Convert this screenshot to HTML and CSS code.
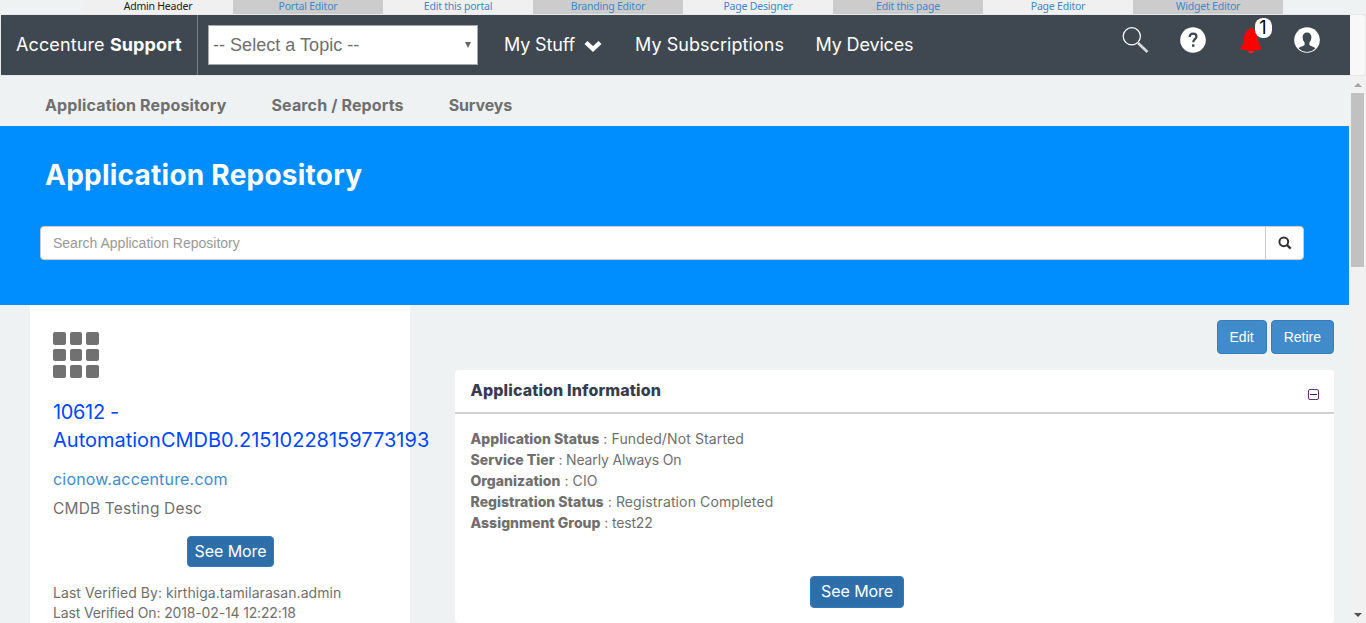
FILE: index.html
```html
<!DOCTYPE html>
<html lang="en">
<head>
<meta charset="utf-8">
<title>Application Repository</title>
<link rel="stylesheet" href="styles.css">
</head>
<body>
<div class="admin-bar">
  <span class="admin-tab current">Admin Header</span>
  <a class="admin-tab">Portal Editor</a>
  <a class="admin-tab">Edit this portal</a>
  <a class="admin-tab">Branding Editor</a>
  <a class="admin-tab">Page Designer</a>
  <a class="admin-tab">Edit this page</a>
  <a class="admin-tab">Page Editor</a>
  <a class="admin-tab">Widget Editor</a>
</div>
<header class="top-frame">
  <div class="top-bar">
    <div class="brand">Accenture <strong>Support</strong></div>
    <div class="topic-select"><span>-- Select a Topic --</span><i class="caret"></i></div>
    <nav class="top-nav">
      <a class="stuff"><span>My Stuff</span>
        <svg width="18" height="12" viewBox="0 0 18 12"><path d="M2 2.500 9 9l7-6.500" fill="none" stroke="#fff" stroke-width="4.400"/></svg></a>
      <a class="subs">My Subscriptions</a>
      <a class="devices">My Devices</a>
    </nav>
    <div class="tools">
      <svg class="tool-search" width="28" height="28" viewBox="0 0 28 28"><circle cx="9.800" cy="9.300" r="8.600" fill="none" stroke="#fff" stroke-width="1.200"/><path d="M16 16 25.500 25" stroke="#d8dadc" stroke-width="2.600"/></svg>
      <svg class="tool-help" width="26" height="26" viewBox="0 0 26 26"><circle cx="13" cy="13" r="12.800" fill="#fff"/><path d="M9.700 10.100c0-2.200 1.400-3.500 3.400-3.500s3.400 1.200 3.400 3c0 2.400-3.300 2.700-3.300 5.600" fill="none" stroke="#3f4850" stroke-width="2.200"/><rect x="12" y="17.300" width="2.400" height="2.500" fill="#3f4850"/></svg>
      <span class="alerts">
        <svg width="22" height="27" viewBox="0 0 22 27"><path d="M11 .5c1.400 0 2 1 2.200 2 3.200 1.300 4.300 4.300 4.600 8 .3 5 1.200 8 4 10.300-.8 2.200-5 3-10.800 3S1 23 .2 20.800c2.800-2.300 3.700-5.300 4-10.300.3-3.700 1.400-6.700 4.600-8C9 1.500 9.600.5 11 .5z" fill="red"/><path d="M8 24h6c-.3 1.600-1.500 2.500-3 2.500S8.300 25.600 8 24z" fill="#d92832"/></svg>
        <span class="badge">1</span>
      </span>
      <svg class="tool-user" width="26" height="26" viewBox="0 0 26 26"><circle cx="13" cy="13" r="12.800" fill="#fff"/><path d="M13 5.500c3 0 4.500 2 4.400 5-.1 2-1 4-2 5v2.200c.8 1.400 4.600 1.800 6 3.600-2 2.200-5 3.600-8.400 3.600s-6.400-1.400-8.400-3.600c1.400-1.800 5.200-2.200 6-3.600v-2.200c-1-1-1.900-3-2-5-.1-3 1.400-5 4.400-5z" fill="#3f4850"/></svg>
    </div>
  </div>
</header>
<div class="viewport">
  <main class="page">
    <nav class="sub-nav">
      <a>Application Repository</a>
      <a>Search / Reports</a>
      <a class="surveys">Surveys</a>
    </nav>
    <section class="hero">
      <h1>Application Repository</h1>
      <div class="search">
        <div class="search-field">Search Application Repository</div>
        <div class="search-button"><svg width="14" height="14" viewBox="0 0 14 14"><circle cx="5.800" cy="5.800" r="4.400" fill="none" stroke="#333" stroke-width="2"/><path d="m9 9 3.700 3.700" stroke="#333" stroke-width="2.400"/></svg></div>
      </div>
    </section>
    <div class="columns">
      <aside class="summary">
        <div class="grid-icon"><i></i><i></i><i></i><i></i><i></i><i></i><i></i><i></i><i></i></div>
        <h2><span class="app-id">10612 -</span><br>AutomationCMDB0.21510228159773193</h2>
        <a class="site">cionow.accenture.com</a>
        <p class="desc">CMDB Testing Desc</p>
        <a class="more">See More</a>
        <p class="verified">Last Verified By: kirthiga.tamilarasan.admin<br><span class="date">Last Verified On: 2018-02-14 12:22:18</span></p>
      </aside>
      <section class="detail">
        <div class="actions"><a>Edit</a><a>Retire</a></div>
        <div class="card">
          <div class="card-head"><h3>Application Information</h3>
            <svg width="11" height="11" viewBox="0 0 11 11"><rect x=".5" y=".5" width="10" height="10" rx="1.500" fill="none" stroke="#673078"/><path d="M2 5.500h7" stroke="#222a44"/></svg></div>
          <div class="card-body">
            <p><b>Application Status</b> : Funded/Not Started</p>
            <p class="tight"><b>Service Tier</b> : Nearly Always On</p>
            <p><b>Organization</b> : CIO</p>
            <p><b>Registration Status</b> : Registration Completed</p>
            <p class="tight"><b>Assignment Group</b> : test22</p>
          </div>
          <a class="more">See More</a>
        </div>
      </section>
    </div>
  </main>
  <div class="scrollbar"><i class="up"></i><i class="thumb"></i><i class="down"></i></div>
</div>
</body>
</html>
```
FILE: styles.css
```css
* { box-sizing: border-box; }
body {
  margin: 0;
  height: 623px;
  overflow: hidden;
  background: #eef2f3;
  color: #6f6f6f;
  font-family: Inter, "Liberation Sans", sans-serif;
  font-size: 14px;
  white-space: nowrap;
  display: flex;
  flex-direction: column;
}
p, h1, h2, h3 { margin: 0; }
.admin-bar {
  height: 14px;
  padding-left: 83px;
  display: flex;
  font: 10.500px/13px "Noto Sans", sans-serif;
  letter-spacing: -0.220px;
}
.admin-tab { width: 150px; text-align: center; color: #4387c7; background: #f0f0f0; }
.admin-tab:nth-child(even) { background: #ccc; }
.admin-tab.current { color: #222; }
.top-frame {
  height: 62px;
  border: 1px solid #e7e7e7;
  border-radius: 4px;
  background: #f8f8f8;
}
.top-bar {
  width: 1349px;
  height: 60px;
  display: flex;
  background: #3f4850;
  color: #fff;
  font-size: 18px;
}
.brand {
  width: 197px;
  padding-left: 15px;
  line-height: 60px;
  letter-spacing: 0.120px;
  border-right: 1px solid #7a8187;
}
.topic-select {
  width: 270px;
  height: 40px;
  margin: 10px 0 0 10px;
  padding: 0 6px 0 4px;
  display: flex;
  align-items: center;
  justify-content: space-between;
  border: 1px solid #aaa;
  background: #fff;
  color: #6f6f6f;
  font: 18px "Liberation Sans", sans-serif;
  letter-spacing: 0.030px;
}
.caret { border: 3.500px solid transparent; border-top: 6px solid #666; border-bottom: 0; }
.top-nav { display: flex; line-height: 60px; margin-left: 26px; }
.stuff { width: 131px; display: flex; align-items: center; gap: 9px; letter-spacing: -0.160px; }
.stuff svg { margin-top: 2px; }
.subs { width: 149px; margin-right: 31.500px; letter-spacing: 0.050px; }
.devices { letter-spacing: -0.150px; }
.tools { margin-left: auto; width: 228px; display: flex; padding-top: 12px; }
.tool-help { margin-left: 29.500px; }
.alerts { position: relative; width: 22px; margin-left: 34px; }
.badge {
  position: absolute;
  left: 15px;
  top: -9px;
  width: 17px;
  height: 20px;
  border-radius: 8px;
  background: #fff;
  color: #000;
  text-align: center;
  line-height: 20px;
}
.tool-user { margin-left: 32px; }
.viewport { flex: 1; display: flex; min-height: 0; }
.page { width: 1349px; }
.sub-nav { height: 50px; padding-left: 45px; display: flex; gap: 45px; font-size: 16px; font-weight: 700; line-height: 58px; letter-spacing: 0.140px; }
.surveys { letter-spacing: -0.150px; }
.hero { height: 179px; padding: 30px 45px 0 40px; background: #008eff; }
.hero h1 { padding-left: 5px; color: #fff; font-size: 28px; font-weight: 700; line-height: 38px; letter-spacing: 0.240px; }
.search { display: flex; height: 34px; margin-top: 32px; border: 1px solid #ccc; border-radius: 4px; background: #fff; }
.search-field { flex: 1; padding-left: 12px; color: #999; font: 14px/32px "Liberation Sans", sans-serif; }
.search-button { width: 38px; border-left: 1px solid #ccc; display: flex; align-items: center; justify-content: center; }
.columns { display: flex; padding-left: 30px; }
.summary { width: 380px; height: 318px; padding: 27px 23px 0; background: #fff; display: flex; flex-direction: column; }
.grid-icon { display: grid; grid-template-columns: repeat(3, 12.700px); gap: 4px; }
.grid-icon i { height: 12.700px; border-radius: 2px; background: #717171; }
.summary h2 { margin-top: 20px; color: #0048ff; font-size: 20px; font-weight: 400; line-height: 28px; }
.app-id { letter-spacing: -0.350px; }
.site { margin-top: 15px; color: #428bca; font-size: 16px; line-height: 20px; letter-spacing: 0.180px; }
.desc { margin-top: 10px; font-size: 15.500px; line-height: 20px; letter-spacing: 0.170px; }
.more {
  display: block;
  border: 1px solid #2e7abf;
  border-radius: 4px;
  background: #2e6fa9;
  color: #fff;
  font-size: 16px;
  line-height: 29px;
  letter-spacing: -0.050px;
  text-align: center;
}
.summary .more { width: 87px; margin: 17px 0 0 134px; }
.verified { margin-top: 16px; line-height: 20px; letter-spacing: 0.060px; }
.date { letter-spacing: -0.150px; }
.detail { width: 879px; margin-left: 45px; padding-top: 15px; }
.actions { display: flex; justify-content: flex-end; gap: 4px; }
.actions a { padding: 0 12px; border: 1px solid #357ebd; border-radius: 4px; background: #428bca; color: #fff; font: 14px/32px "Liberation Sans", sans-serif; }
.card { height: 253px; margin-top: 16px; border-radius: 4px; background: #fff; }
.card-head { height: 44px; padding: 0 15px 0 16px; display: flex; justify-content: space-between; border-bottom: 2px solid #d0d0d0; }
.card-head svg { margin-top: 19px; }
.card-head h3 { margin-left: -0.500px; color: #383c50; font-size: 16px; font-weight: 800; line-height: 41px; letter-spacing: 0.120px; }
.card-body { padding: 14px 15.500px 0; height: 162px; line-height: 21px; letter-spacing: 0.120px; }
.card-body b { font-weight: 800; letter-spacing: 0.020px; }
.card-body .tight { letter-spacing: -0.150px; }
.card .more { width: 94px; height: 32px; margin-left: 355px; line-height: 29px; }
.scrollbar { width: 17px; display: flex; flex-direction: column; align-items: center; background: #f1f1f1; }
.up { margin-top: 7px; border: 4px solid transparent; border-bottom-color: #a3a3a3; border-top: 0; }
.thumb { width: 13px; height: 174px; margin-top: 6px; background: #c1c1c1; }
.down { margin: auto 0 6px; border: 4px solid transparent; border-top-color: #505050; border-bottom: 0; }
```
